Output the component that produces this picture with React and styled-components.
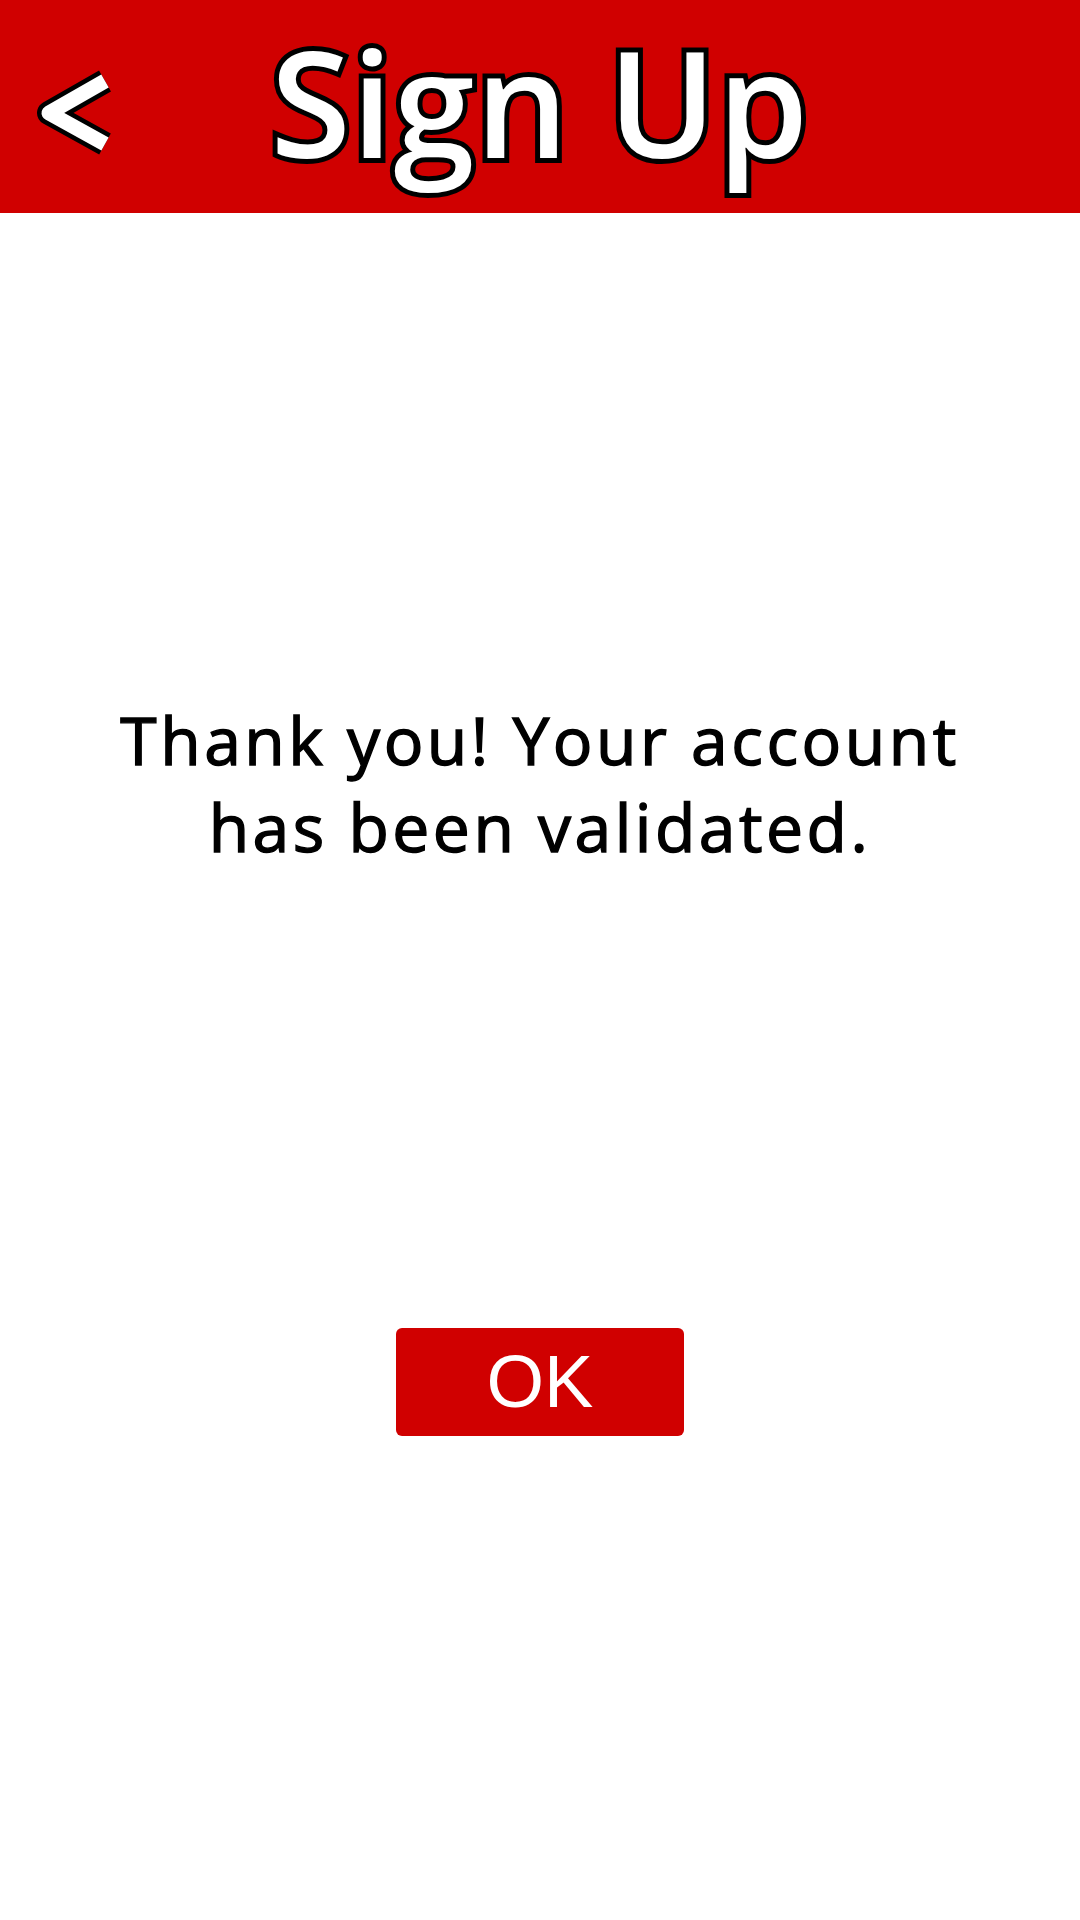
import React from 'react'
import styled, { createGlobalStyle } from 'styled-components';

const GlobalStyle = createGlobalStyle`
  html, body {
    margin: 0;
    padding: 0;
    background: #ffffff;
  }
  body {
    width: 1080px;
    min-height: 1920px;
    font-family: "Open Sans", "Noto Sans", sans-serif;
  }
`;

const Page = styled.div`
  width: 1080px;
  min-height: 1920px;
  display: flex;
  flex-direction: column;
  align-items: center;
  background: #ffffff;
`;

const Header = styled.header`
  width: 100%;
  height: 213px;
  box-sizing: border-box;
  background: #d00000;
  display: grid;
  grid-template-columns: 1fr auto 1fr;
  align-items: start;
`;

const BackButton = styled.button`
  justify-self: start;
  margin: 65px 0 0 35px;
  padding: 0;
  border: none;
  background: transparent;
  cursor: pointer;
  line-height: 0;
`;

const Title = styled.h1`
  margin: 0;
  padding-top: 29px;
  font-family: "Open Sans", "Noto Sans", sans-serif;
  font-weight: 600;
  font-size: 146px;
  line-height: 146px;
  color: #ffffff;
  -webkit-text-stroke: 10px #000000;
  paint-order: stroke fill;
  letter-spacing: 1px;
`;

const Message = styled.p`
  margin: 483px 0 0;
  font-family: "Open Sans", "Noto Sans", sans-serif;
  font-weight: 400;
  font-size: 66px;
  line-height: 87px;
  letter-spacing: 3.5px;
  text-align: center;
  color: #000000;
  -webkit-text-stroke: 1.4px #000000;
`;

const OkButton = styled.button`
  margin-top: 458px;
  width: 288px;
  height: 108px;
  border: none;
  border-radius: 6px;
  background: #d00000;
  color: #ffffff;
  font-family: "Liberation Sans", Arial, sans-serif;
  font-size: 74px;
  line-height: 1;
  padding: 0;
  cursor: pointer;
`;

function BackIcon() {
  return (
    <svg width="85" height="95" viewBox="0 0 85 95">
      <polyline points="70,16 14,48 70,79" fill="none" stroke="#000" strokeWidth="24" strokeLinejoin="round" />
      <polyline points="70,16 14,48 70,79" fill="none" stroke="#fff" strokeWidth="15" strokeLinejoin="round" />
    </svg>
  );
}

function App() {
  return (
    <>
      <GlobalStyle />
      <Page>
        <Header>
          <BackButton aria-label="Back">
            <BackIcon />
          </BackButton>
          <Title>Sign Up</Title>
          <div />
        </Header>
        <Message>
          Thank you! Your account<br />
          has been validated.
        </Message>
        <OkButton>OK</OkButton>
      </Page>
    </>
  )
}

export default App
